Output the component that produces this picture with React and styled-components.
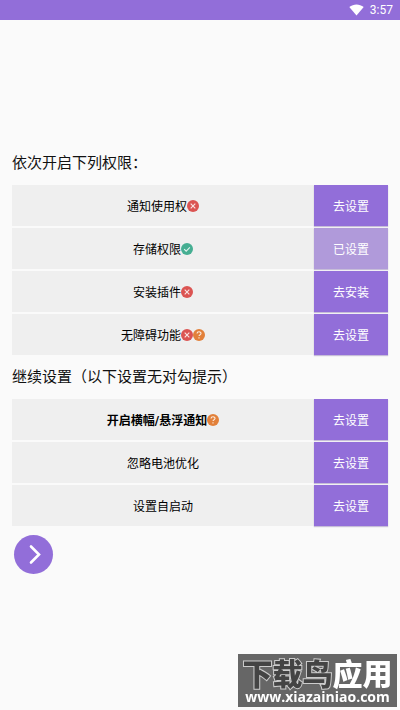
// REACT
import React from 'react'

// STYLED COMPONENTS
import styled, { createGlobalStyle, ThemeProvider } from 'styled-components'

const theme = {
    purple: '#926ed9',
    purpleDone: '#b09ada',
    page: '#fafafa',
    row: '#efefef',
    red: '#db5452',
    green: '#45ae92',
    orange: '#e2803a',
}

// DATA
const permissions = [
    { id: 'notify', label: '通知使用权', marks: ['cross'], action: '去设置' },
    { id: 'storage', label: '存储权限', marks: ['check'], action: '已设置', done: true },
    { id: 'plugin', label: '安装插件', marks: ['cross'], action: '去安装' },
    { id: 'access', label: '无障碍功能', marks: ['cross', 'help'], action: '去设置' },
]

const extras = [
    { id: 'banner', label: '开启横幅/悬浮通知', marks: ['help'], action: '去设置', bold: true },
    { id: 'battery', label: '忽略电池优化', marks: [], action: '去设置' },
    { id: 'autostart', label: '设置自启动', marks: [], action: '去设置' },
]

// Styled Components
const GlobalStyle = createGlobalStyle`
    * {
        box-sizing: border-box;
    }
    body {
        margin: 0;
        background: #fafafa;
        color: #111;
        font-family: Roboto, "Noto Sans CJK SC", sans-serif;
    }
    button {
        font-family: inherit;
        border: 0;
        padding: 0;
        cursor: pointer;
    }
`

const Screen = styled.div`
    display: flex;
    flex-direction: column;
    min-height: 100vh;
    background: ${({ theme }) => theme.page};
`

const StatusBar = styled.header`
    display: flex;
    align-items: center;
    justify-content: flex-end;
    gap: 6px;
    height: 20px;
    padding: 0 7px;
    background: ${({ theme }) => theme.purple};
    color: #fff;
    font-size: 12px;

    svg {
        width: 15px;
        height: 12px;
    }
`

const Content = styled.main`
    display: flex;
    flex: 1;
    flex-direction: column;
    justify-content: center;
    padding: 0 12px 3px;
`

const Heading = styled.h2`
    margin: 0;
    font-size: 15px;
    font-weight: 400;
    line-height: 20px;
`

const List = styled.ul`
    display: flex;
    flex-direction: column;
    gap: 2px;
    margin: 12px 0;
    padding: 0;
    list-style: none;
`

const Row = styled.li`
    display: flex;
    height: 41px;
    background: ${({ theme }) => theme.row};
`

const Label = styled.div`
    display: flex;
    flex: 1;
    align-items: center;
    justify-content: center;
    font-size: 12px;
    font-weight: ${({ $bold }) => ($bold ? 700 : 400)};
    color: #000;

    svg {
        width: 12px;
        height: 12px;
    }
`

const ActionButton = styled.button`
    width: 74px;
    background: ${({ theme, $done }) => ($done ? theme.purpleDone : theme.purple)};
    box-shadow: 0 1px 1px rgba(80, 50, 140, 0.3);
    color: #fff;
    font-size: 12px;
`

const NextButton = styled.button`
    display: flex;
    align-items: center;
    justify-content: center;
    width: 39px;
    height: 39px;
    margin: -3px 2px 0;
    border-radius: 50%;
    background: ${({ theme }) => theme.purple};
`

const Watermark = styled.aside`
    position: fixed;
    right: 3px;
    bottom: 3px;
    display: flex;
    flex-direction: column;
    align-items: center;
    justify-content: space-between;
    width: 159px;
    height: 53px;
    padding: 2px 0;
    background: #666;
    color: #fff;
    white-space: nowrap;
`

const SiteName = styled.div`
    font-family: "Noto Sans CJK SC", sans-serif;
    font-size: 30px;
    font-weight: 900;
    line-height: 32px;

    span {
        color: #444;
        -webkit-text-stroke: 2px #ccc;
        paint-order: stroke fill;
    }
`

const SiteUrl = styled.div`
    font-family: "Open Sans", sans-serif;
    font-size: 14px;
    font-weight: 700;
    line-height: 16px;
`

// Small round marks after a label
const markShapes = {
    cross: { color: theme.red, path: 'M4 4 L9 9 M9 4 L4 9', title: '未开启' },
    check: { color: theme.green, path: 'M3.4 6.7 L5.6 8.8 L9.6 4.8', title: '已开启' },
    help: {
        color: theme.orange,
        path: 'M4.4 5 C4.4 2.4 8.7 2.4 8.7 4.9 C8.7 6.2 6.5 6.2 6.5 7.7 M6.5 9 V10.2',
        title: '帮助',
    },
}

function Mark({ kind }) {
    const { color, path, title } = markShapes[kind]
    return (
        <svg viewBox="0 0 13 13" role="img" aria-label={title}>
            <circle cx="6.5" cy="6.5" r="6.5" fill={color} />
            <path d={path} fill="none" stroke="#fff" strokeOpacity="0.85" strokeWidth="1.2" />
        </svg>
    )
}

function SettingList({ items }) {
    return (
        <List>
            {items.map((item) => (
                <Row key={item.id}>
                    <Label $bold={item.bold}>
                        <span id={item.id}>{item.label}</span>
                        {item.marks.map((kind) => (
                            <Mark key={kind} kind={kind} />
                        ))}
                    </Label>
                    <ActionButton type="button" $done={item.done} aria-describedby={item.id}>
                        {item.action}
                    </ActionButton>
                </Row>
            ))}
        </List>
    )
}

function App() {
    return (
        <ThemeProvider theme={theme}>
            <GlobalStyle />
            <Screen>
                <StatusBar>
                    <svg viewBox="0 0 15 12" aria-hidden="true">
                        <path d="M0.3 3 C4.5 -0.4 10.5 -0.4 14.7 3 L7.5 11.6 Z" fill="#fff" />
                    </svg>
                    <span>3:57</span>
                </StatusBar>
                <Content>
                    <Heading>依次开启下列权限：</Heading>
                    <SettingList items={permissions} />
                    <Heading>继续设置（以下设置无对勾提示）</Heading>
                    <SettingList items={extras} />
                    <NextButton type="button" aria-label="下一步">
                        <svg width="39" height="39" viewBox="0 0 39 39" aria-hidden="true">
                            <path
                                d="M17 11.5 L25 19.5 L17 27.5"
                                fill="none"
                                stroke="#fff"
                                strokeWidth="2.6"
                                strokeLinecap="round"
                            />
                        </svg>
                    </NextButton>
                </Content>
            </Screen>
            <Watermark>
                <SiteName>
                    <span>下载鸟</span>应用
                </SiteName>
                <SiteUrl>www.xiazainiao.com</SiteUrl>
            </Watermark>
        </ThemeProvider>
    )
}

export default App
